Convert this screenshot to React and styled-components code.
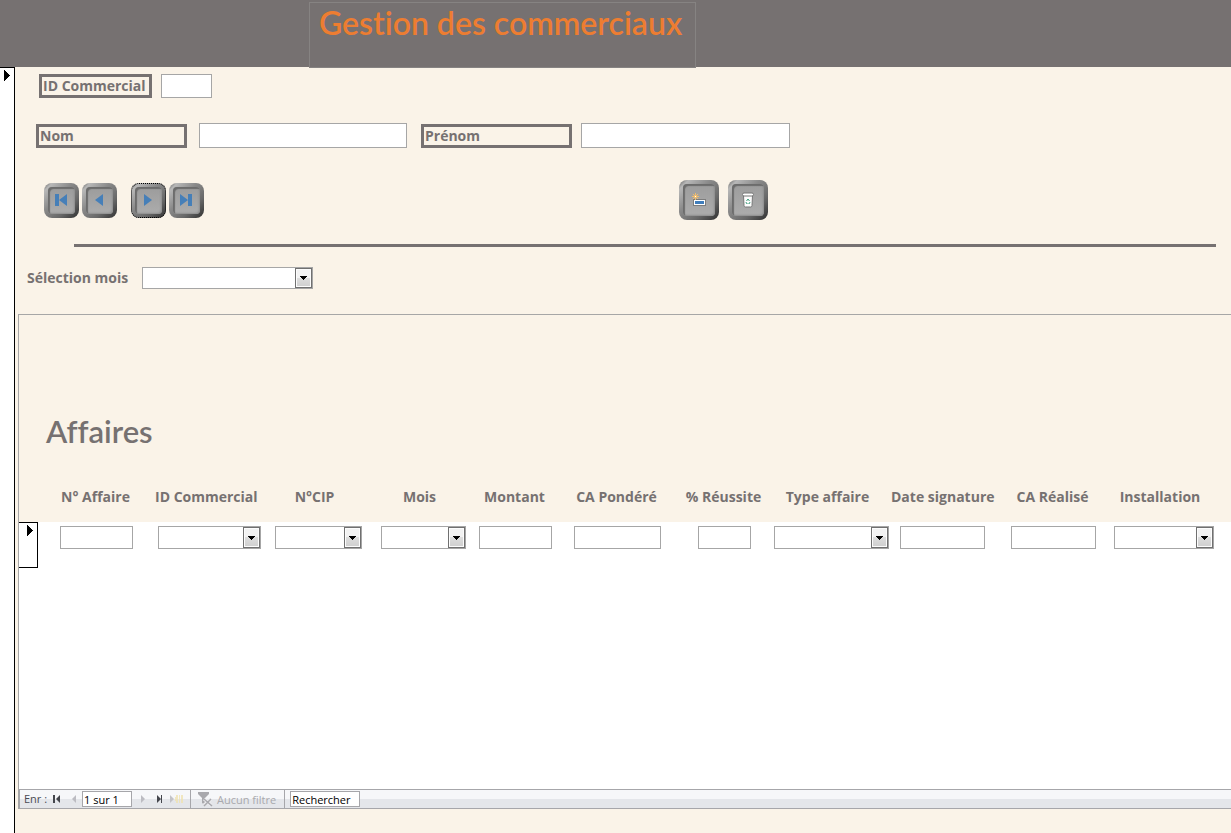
import React from 'react';
import styled, { createGlobalStyle } from 'styled-components';

const columns = [
  { name: 'affaire', label: 'N° Affaire', col: 117, field: 73 },
  { name: 'commercial', label: 'ID Commercial', col: 108, field: 103, list: true },
  { name: 'cip', label: 'N°CIP', col: 111, field: 87, list: true },
  { name: 'mois', label: 'Mois', col: 99, field: 85, list: true },
  { name: 'montant', label: 'Montant', col: 85, field: 73 },
  { name: 'pondere', label: 'CA Pondéré', col: 119, field: 87 },
  { name: 'reussite', label: '% Réussite', col: 95, field: 53 },
  { name: 'type', label: 'Type affaire', col: 119, field: 115, list: true },
  { name: 'signature', label: 'Date signature', col: 102, field: 85 },
  { name: 'realise', label: 'CA Réalisé', col: 121, field: 85 },
  { name: 'installation', label: 'Installation', col: 100, field: 100, list: true },
];

const Combo = ({ width, height, ...props }) => (
  <ComboBox $width={width} $height={height}>
    <Select {...props}>
      <option value="" />
    </Select>
    <ComboArrow>
      <svg width="7" height="4" viewBox="0 0 7 4" shapeRendering="crispEdges">
        <path d="M0 0h7v1h-1v1h-1v1h-1v1h-1v-1h-1v-1h-1v-1h-1z" fill="#000" />
      </svg>
    </ComboArrow>
  </ComboBox>
);

const RecordArrow = () => (
  <svg width="6" height="11" viewBox="0 0 6 11" shapeRendering="crispEdges">
    <path d="M0 0h1v1h1v1h1v1h1v1h1v1h1v1h-1v1h-1v1h-1v1h-1v1h-1v1h-1z" fill="#000" />
  </svg>
);

const FirstIcon = () => (
  <svg width="13" height="12" viewBox="0 0 13 12" fill="currentColor">
    <path d="M0 0h4v12h-4zM12 0v12l-8-6z" />
  </svg>
);
const PrevIcon = () => (
  <svg width="13" height="12" viewBox="0 0 13 12" fill="currentColor">
    <path d="M10 0v12l-8-6z" />
  </svg>
);
const NextIcon = () => (
  <svg width="13" height="12" viewBox="0 0 13 12" fill="currentColor">
    <path d="M2 0v12l8-6z" />
  </svg>
);
const LastIcon = () => (
  <svg width="13" height="12" viewBox="0 0 13 12" fill="currentColor">
    <path d="M0 0v12l8-6zM8 0h4v12h-4z" />
  </svg>
);
const AddIcon = () => (
  <svg width="16" height="16" viewBox="0 0 16 16">
    <rect x="2.500" y="7.500" width="12" height="6" fill="#fff" stroke="#7d7d7d" />
    <rect x="4" y="9" width="9" height="3" fill="#3f7dbb" />
    <path d="M4.500 1v7M1 4.500h7M2 2l5 5M7 2l-5 5" stroke="#f3bd68" fill="none" />
    <rect x="4" y="4" width="1" height="1" fill="#fff" />
  </svg>
);
const BinIcon = () => (
  <svg width="12" height="16" viewBox="0 0 12 16">
    <path d="M1.500 3.500l.5 10q0 1.500 1.500 1.500h5q1.500 0 1.500-1.500l.5-10z" fill="#fdfdfd" stroke="#777" />
    <rect x="0.500" y="1" width="11" height="3" rx="1.500" fill="#fff" stroke="#777" />
    <path d="M4.500 9l1.500-2 1.500 2M8 10l-.5 1.500h-1M4 10l.5 1.500h1" stroke="#3f9d7c" fill="none" />
  </svg>
);

// small glyphs of the record bar
const BarIcon = ({ d, width = 8 }) => (
  <svg width={width} height="8" viewBox={`0 0 ${width} 8`} fill="currentColor">
    <path d={d} />
  </svg>
);
const NewRecordIcon = () => (
  <svg width="13" height="8" viewBox="0 0 13 8">
    <path d="M0 0v8l4-4z" fill="#c3c3c7" />
    <path d="M6 1h2M9 1h1M11 1h2M5 3h3M9 3h1M11 3h2M5 5h3M9 5h1M11 5h2M6 7h2M9 7h1M11 7h2" stroke="#efe2ad" strokeWidth="1.500" />
  </svg>
);
const FilterIcon = () => (
  <svg width="16" height="16" viewBox="0 0 16 16">
    <path d="M1 1h11v2l-4 4v7l-3-2v-5l-4-4z" fill="#a9a9ad" />
    <path d="M7 8l7 6M14 8l-7 6" stroke="#ededf0" strokeWidth="3" />
    <path d="M7 8l8 7M14 8l-7 7" stroke="#a9a9ad" strokeWidth="1.500" />
  </svg>
);

const App = () => (
  <Page>
    <GlobalStyle />
    <Header>
      <Title>Gestion des commerciaux</Title>
    </Header>
    <Body>
      <Selector type="button" aria-label="Sélecteur">
        <RecordArrow />
      </Selector>
      <Main>
        <IdRow>
          <Field $gap={9}>
            <BoxLabel htmlFor="id">ID Commercial</BoxLabel>
            <Input id="id" $width={51} $height={24} />
          </Field>
        </IdRow>
        <NameRow>
          <Field $gap={12}>
            <BoxLabel htmlFor="nom" $width={151}>
              Nom
            </BoxLabel>
            <Input id="nom" $width={208} $height={25} />
          </Field>
          <Field $gap={9}>
            <BoxLabel htmlFor="prenom" $width={151}>
              Prénom
            </BoxLabel>
            <Input id="prenom" $width={209} $height={25} />
          </Field>
        </NameRow>
        <Actions>
          <ButtonPair>
            <MetalButton type="button" aria-label="Premier">
              <FirstIcon />
            </MetalButton>
            <MetalButton type="button" aria-label="Précédent">
              <PrevIcon />
            </MetalButton>
          </ButtonPair>
          <ButtonPair>
            <MetalButton type="button" aria-label="Suivant" $focused>
              <NextIcon />
            </MetalButton>
            <MetalButton type="button" aria-label="Dernier">
              <LastIcon />
            </MetalButton>
          </ButtonPair>
          <EditButtons>
            <MetalButton type="button" aria-label="Ajouter" $size={40}>
              <AddIcon />
            </MetalButton>
            <MetalButton type="button" aria-label="Supprimer" $size={40}>
              <BinIcon />
            </MetalButton>
          </EditButtons>
        </Actions>
        <Rule />
        <MonthRow>
          <MonthLabel htmlFor="mois">Sélection mois</MonthLabel>
          <Combo id="mois" width={171} height={22} />
        </MonthRow>
        <SubForm>
          <SubHeader>
            <SubTitle>Affaires</SubTitle>
          </SubHeader>
          <Scroll>
            <Table>
              <colgroup>
                <Col $width={19} />
                {columns.map((c) => (
                  <Col key={c.name} $width={c.col} />
                ))}
                <col />
              </colgroup>
              <thead>
                <tr>
                  <Th />
                  {columns.map((c) => (
                    <Th key={c.name} $list={c.list}>
                      {c.label}
                    </Th>
                  ))}
                  <Th />
                </tr>
              </thead>
              <tbody>
                <tr>
                  <Td>
                    <RowSelector type="button" aria-label="Ligne">
                      <RecordArrow />
                    </RowSelector>
                  </Td>
                  {columns.map((c) => (
                    <Td key={c.name}>
                      <Cell>
                        {c.list ? (
                          <Combo aria-label={c.label} width={c.field} height={23} />
                        ) : (
                          <Input aria-label={c.label} $width={c.field} $height={23} />
                        )}
                      </Cell>
                    </Td>
                  ))}
                  <Td />
                </tr>
              </tbody>
            </Table>
          </Scroll>
          <RecordBar>
            <BarLabel htmlFor="record">Enr :</BarLabel>
            <BarButton type="button" aria-label="Premier enregistrement">
              <BarIcon d="M0 0h2v8h-2zM7 0v8l-4-4z" />
            </BarButton>
            <BarButton type="button" aria-label="Enregistrement précédent" disabled>
              <BarIcon d="M6 0v8l-4-4z" />
            </BarButton>
            <BarInput id="record" defaultValue="1 sur 1" $width={50} />
            <BarButton type="button" aria-label="Enregistrement suivant" disabled>
              <BarIcon d="M4 0v8l4-4z" />
            </BarButton>
            <BarButton type="button" aria-label="Dernier enregistrement">
              <BarIcon d="M3 0v8l4-4zM7 0h1v8h-1z" />
            </BarButton>
            <BarButton type="button" aria-label="Nouvel enregistrement" $wide disabled>
              <NewRecordIcon />
            </BarButton>
            <FilterButton type="button" disabled>
              <FilterIcon />
              Aucun filtre
            </FilterButton>
            <BarInput aria-label="Rechercher" defaultValue="Rechercher" $width={70} />
          </RecordBar>
        </SubForm>
      </Main>
    </Body>
  </Page>
);

export default App;

const GlobalStyle = createGlobalStyle`
  * {
    box-sizing: border-box;
  }
  body {
    margin: 0;
    background: #faf3e8;
    color: #767171;
    font-family: 'Open Sans', 'Noto Sans', sans-serif;
    font-size: 14px;
  }
  button,
  input,
  select {
    font: inherit;
    padding: 0;
    margin: 0;
  }
  svg {
    display: block;
    flex: none;
  }
`;
const Page = styled.div`
  min-height: 100vh;
  display: flex;
  flex-direction: column;
`;
const Header = styled.header`
  height: 67px;
  padding: 2px 0 0 309px;
  background: #767171;
`;
const Title = styled.h1`
  width: fit-content;
  min-width: 387px;
  height: 66px;
  margin: 0;
  padding: 0 9px;
  border: 1px solid #868382;
  background: #767171;
  color: #ed7d31;
  font-family: Lato, sans-serif;
  font-size: 32px;
  font-weight: 600;
  font-variant-ligatures: none;
  line-height: 40px;
  white-space: nowrap;
`;
const Body = styled.div`
  flex: 1;
  display: flex;
`;
const Selector = styled.button`
  flex: none;
  width: 15px;
  display: flex;
  align-items: flex-start;
  padding: 2px 0 0 4px;
  border: solid #000;
  border-width: 1px 1px 0 0;
  background: #fff;
`;
const Main = styled.main`
  flex: 1;
  min-width: 0;
  display: flex;
  flex-direction: column;
  padding: 7px 0 24px 3px;
`;
const Label = styled.label`
  font-weight: bold;
  line-height: 18px;
  white-space: nowrap;
`;
const BoxLabel = styled(Label)`
  ${(props) => (props.$width ? `width: ${props.$width}px;` : '')}
  min-width: 113px;
  padding: 0 1px;
  border: 3px solid #767171;
`;
const MonthLabel = styled(Label)`
  min-width: 105px;
`;
const Input = styled.input`
  width: ${(props) => props.$width}px;
  height: ${(props) => props.$height}px;
  padding: 0 3px;
  border: 1px solid #a6a6a6;
  background: #fff;
`;
const Field = styled.div`
  display: flex;
  align-items: center;
  gap: ${(props) => props.$gap}px;
`;
const IdRow = styled.div`
  display: flex;
  padding-left: 21px;
`;
const NameRow = styled.div`
  display: flex;
  gap: 14px;
  margin-top: 25px;
  padding-left: 18px;
`;
const Actions = styled.div`
  display: flex;
  align-items: center;
  gap: 14px;
  margin-top: 32px;
  padding-left: 26px;
`;
const ButtonPair = styled.div`
  display: flex;
  gap: 3px;
`;
const EditButtons = styled.div`
  display: flex;
  gap: 9px;
  margin-left: 461px;
`;
const MetalButton = styled.button`
  width: ${(props) => props.$size || 35}px;
  height: ${(props) => props.$size || 35}px;
  display: flex;
  align-items: center;
  justify-content: center;
  border: 4px solid transparent;
  border-radius: 8px;
  background:
    linear-gradient(#9c9c9c, #acacac) padding-box,
    linear-gradient(135deg, #5c5c5c 0%, #b8b8b8 12%, #8a8a8a 40%, #686868 70%, #2f2f2f 100%) border-box;
  box-shadow:
    inset 2px 2px 1px #6c6c6c,
    inset -1px -1px 2px #8c8c8c;
  color: #467fb8;
  outline: ${(props) => (props.$focused ? '1px dotted #000' : 'none')};
  outline-offset: -1px;
`;
const Rule = styled.hr`
  align-self: stretch;
  height: 3px;
  margin: 24px 15px 0 56px;
  border: 0;
  background: #767171;
`;
const MonthRow = styled.div`
  display: flex;
  align-items: center;
  gap: 10px;
  margin-top: 20px;
  padding-left: 9px;
`;
const ComboBox = styled.span`
  position: relative;
  display: block;
  width: ${(props) => props.$width}px;
  height: ${(props) => props.$height}px;
`;
const Select = styled.select`
  appearance: none;
  display: block;
  width: 100%;
  height: 100%;
  border: 1px solid #a6a6a6;
  border-radius: 0;
  background: #fff;
`;
const ComboArrow = styled.span`
  position: absolute;
  top: 1px;
  right: 1px;
  bottom: 1px;
  width: 17px;
  display: flex;
  align-items: center;
  justify-content: center;
  border: 1px solid #707070;
  background: linear-gradient(#f2f2f2 50%, #dddddd 50%, #cfcfcf);
  box-shadow: inset 0 0 0 1px #fcfcfc;
  pointer-events: none;
`;
const SubForm = styled.section`
  flex: 1;
  display: flex;
  flex-direction: column;
  margin-top: 25px;
  border: solid #a6a6a6;
  border-width: 1px 0 0 1px;
  background: #fff;
`;
const SubHeader = styled.div`
  height: 158px;
  padding: 97px 0 0 27px;
  background: #faf3e8;
`;
const SubTitle = styled.h2`
  margin: 0;
  font-family: Lato, sans-serif;
  font-size: 31px;
  font-weight: 600;
  font-variant-ligatures: none;
  line-height: 38px;
`;
const Scroll = styled.div`
  flex: 1;
  overflow: hidden;
`;
const Table = styled.table`
  width: 100%;
  min-width: 1195px;
  table-layout: fixed;
  border-collapse: collapse;
`;
const Col = styled.col`
  width: ${(props) => props.$width}px;
`;
const Th = styled.th`
  height: 49px;
  padding: 15px ${(props) => (props.$list ? 8 : 2)}px 16px 0;
  background: #faf3e8;
  line-height: 18px;
  white-space: nowrap;
`;
const Td = styled.td`
  padding: 0;
  vertical-align: top;
`;
const Cell = styled.div`
  display: flex;
  justify-content: center;
  padding-top: 4px;
`;
const RowSelector = styled.button`
  width: 19px;
  height: 46px;
  display: flex;
  align-items: flex-start;
  padding: 2px 0 0 8px;
  border: solid #000;
  border-width: 1px 1px 1px 0;
  background: #fff;
`;
const RecordBar = styled.div`
  display: flex;
  align-items: stretch;
  height: 20px;
  border: solid #a6a6aa;
  border-width: 1px 0 1px 1px;
  background: linear-gradient(#f6f7f9 50%, #e4e6ea 50%);
  font-size: 11px;
`;
const BarLabel = styled.label`
  width: 28px;
  padding-left: 4px;
  color: #4a4a52;
  line-height: 18px;
  white-space: nowrap;
`;
const BarButton = styled.button`
  min-width: ${(props) => (props.$wide ? 21 : 17)}px;
  display: flex;
  align-items: center;
  justify-content: center;
  border: 0;
  background: none;
  color: #44464c;
  &:disabled {
    color: #bcbcc2;
  }
`;
const BarInput = styled.input`
  width: ${(props) => props.$width}px;
  height: 16px;
  align-self: center;
  padding: 0 1px;
  border: 1px solid #a6a6aa;
  background: #fff;
  color: #000;
`;
const FilterButton = styled.button`
  display: flex;
  align-items: center;
  gap: 4px;
  margin: 0 5px 0 3px;
  padding: 0 8px 0 6px;
  border: solid #a6a6aa;
  border-width: 0 1px;
  background: none;
  color: #a9a9ad;
  white-space: nowrap;
`;
